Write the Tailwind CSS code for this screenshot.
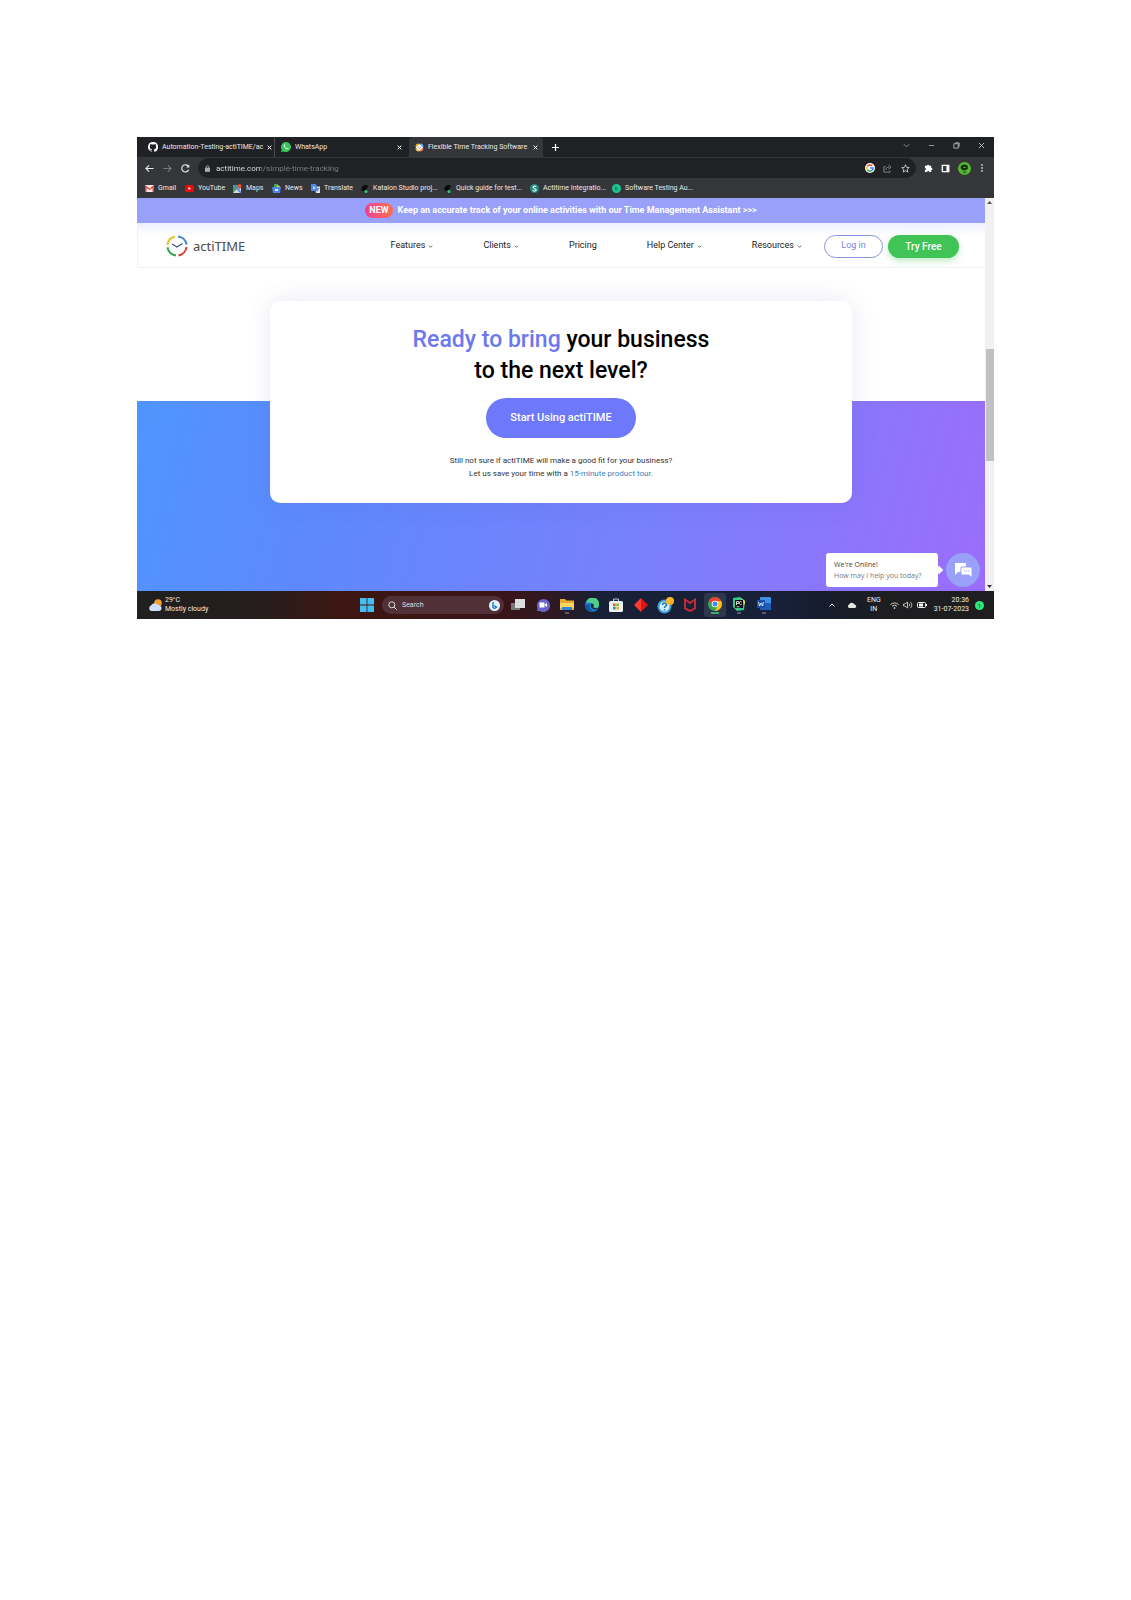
<!DOCTYPE html>
<html lang="en">
<head>
<meta charset="utf-8">
<meta name="viewport" content="width=device-width, initial-scale=1">
<title>Flexible Time Tracking Software</title>
<script src="https://cdn.jsdelivr.net/npm/@tailwindcss/browser@4"></script>
</head>
<body class="bg-white px-[137px] pt-[137px] pb-24 font-['Roboto',sans-serif]">
<div class="flex flex-col">

  <!-- Browser tabs -->
  <header class="bg-[#35363a] text-[7px] text-[#e8eaed]">
    <div class="flex h-5 items-stretch bg-[#202124]">
      <div class="flex w-[138px] items-center gap-1 border-r border-[#4a4b4f] bg-clip-padding pr-[2px] pl-[11px]">
        <svg class="size-[10px] shrink-0" viewBox="0 0 16 16" fill="#fff"><path d="M8 0a8 8 0 0 0-2.500 15.600c.4.1.5-.2.5-.4v-1.400c-2.200.5-2.700-1-2.700-1-.4-.9-.9-1.200-.9-1.200-.7-.5.1-.5.1-.5.8.1 1.200.8 1.200.8.7 1.200 1.900.9 2.300.7.1-.5.3-.9.5-1.100-1.800-.2-3.600-.9-3.600-4 0-.9.3-1.600.8-2.100-.1-.2-.4-1 .1-2.100 0 0 .7-.2 2.200.8a7.600 7.600 0 0 1 4 0c1.500-1 2.200-.8 2.200-.8.4 1.100.2 1.900.1 2.100.5.6.8 1.300.8 2.100 0 3.100-1.900 3.800-3.700 4 .3.200.6.7.6 1.500v2.200c0 .2.1.5.6.4A8 8 0 0 0 8 0z"/></svg>
        <button class="grow text-left whitespace-nowrap">Automation-Testing-actiTIME/ac</button>
        <button class="flex w-3 justify-center" aria-label="Close tab"><svg class="size-[5px]" viewBox="0 0 8 8" stroke="#fff" stroke-width="1.600"><path d="M1 1l6 6M7 1L1 7"/></svg></button>
      </div>
      <div class="flex w-[134px] items-center gap-1 pr-1 pl-[6px]">
        <svg class="size-[10px] shrink-0" viewBox="0 0 16 16"><path d="M0 16l1.100-4A8 8 0 1 1 4.200 15z" fill="#35c759"/><path d="M5 4c-1 .8-.9 2.300.4 4.200s3 3.300 4.700 3.500c1.200 0 1.900-.7 1.900-1.700l-2-1-.9 1c-1.300-.5-2.200-1.400-2.800-2.600l.7-.9L6.200 4z" fill="#fff"/></svg>
        <button class="grow text-left">WhatsApp</button>
        <button class="flex w-3 justify-center" aria-label="Close tab"><svg class="size-[5px]" viewBox="0 0 8 8" stroke="#fff" stroke-width="1.600"><path d="M1 1l6 6M7 1L1 7"/></svg></button>
      </div>
      <div class="flex w-[134px] items-center gap-1 rounded-t bg-[#35363a] pr-1 pl-[6px]">
        <svg class="size-[9px] shrink-0" viewBox="0 0 16 16"><circle cx="8" cy="8" r="6" fill="#fff"/><g fill="none" stroke-width="3"><path d="M2 7a6 6 0 0 1 5-5" stroke="#f3b52d"/><path d="M9 2a6 6 0 0 1 5 5" stroke="#6fa8e8"/><path d="M14 9a6 6 0 0 1-5 5" stroke="#e96b4c"/><path d="M7 14a6 6 0 0 1-5-5" stroke="#e8c55a"/></g><path d="M5 7l3 2 3-2" stroke="#555" fill="none"/></svg>
        <button class="grow text-left whitespace-nowrap">Flexible Time Tracking Software</button>
        <button class="flex w-3 justify-center" aria-label="Close tab"><svg class="size-[5px]" viewBox="0 0 8 8" stroke="#fff" stroke-width="1.600"><path d="M1 1l6 6M7 1L1 7"/></svg></button>
      </div>
      <button class="flex w-6 items-center justify-center" aria-label="New tab"><svg class="size-[7px]" viewBox="0 0 8 8" stroke="#fff" stroke-width="1.400"><path d="M4 0v8M0 4h8"/></svg></button>
      <div class="ml-auto flex items-center gap-[18px] pr-[9px] pb-1">
        <button aria-label="Search tabs"><svg class="block size-[7px]" viewBox="0 0 8 8" fill="none" stroke="#9a9b9e"><path d="M1 2.500l3 3 3-3"/></svg></button>
        <button aria-label="Minimise"><svg class="block size-[7px]" viewBox="0 0 8 8" stroke="#aaa"><path d="M1 4h6"/></svg></button>
        <button aria-label="Restore"><svg class="block size-[7px]" viewBox="0 0 8 8" fill="none" stroke="#bbb"><path d="M1 2h5v5H1zM2.500 1H7v4.500"/></svg></button>
        <button aria-label="Close window"><svg class="block size-[7px]" viewBox="0 0 8 8" stroke="#ccc"><path d="M1 1l6 6M7 1L1 7"/></svg></button>
      </div>
    </div>

    <!-- Address bar -->
    <div class="flex h-[22px] items-center pl-2">
      <div class="flex w-[53px] gap-[9px]">
        <button aria-label="Back"><svg class="block size-[9px]" viewBox="0 0 10 10" fill="none" stroke="#e8eaed" stroke-width="1.200"><path d="M9.500 5H1M4.500 1.500L1 5l3.500 3.500"/></svg></button>
        <button aria-label="Forward"><svg class="block size-[9px]" viewBox="0 0 10 10" fill="none" stroke="#77787b" stroke-width="1.200"><path d="M.5 5H9M5.500 1.500L9 5 5.500 8.500"/></svg></button>
        <button aria-label="Reload"><svg class="block size-[9px]" viewBox="0 0 10 10" fill="none" stroke="#e8eaed" stroke-width="1.300"><path d="M8.500 6.500A4 4 0 1 1 8.200 2.700"/><path d="M9.200.5v3.300H5.800z" fill="#e8eaed" stroke="none"/></svg></button>
      </div>
      <div class="flex h-5 grow items-center gap-[6px] rounded-full bg-[#202124] pr-[6px] pl-[7px]">
        <svg class="h-[7px] w-[5px]" viewBox="0 0 6 8"><path d="M0 3h6v5H0z" fill="#aaabad"/><path d="M1.500 3.500V2a1.500 1.500 0 0 1 3 0v1.500" fill="none" stroke="#aaabad"/></svg>
        <input aria-label="Address" value="actitime.com/simple-time-tracking" class="h-4 min-w-0 grow bg-[linear-gradient(90deg,#e8eaed_45px,#7d8084_45px)] bg-clip-text text-[8px] text-transparent outline-none">
        <svg class="size-[10px]" viewBox="0 0 16 16"><circle cx="8" cy="8" r="8" fill="#fff"/><g fill="none" stroke-width="2.400"><path d="M3.700 5.500A5 5 0 0 1 11.500 4.500" stroke="#ea4335"/><path d="M3.700 5.500a5 5 0 0 0 0 5" stroke="#fbbc05"/><path d="M3.700 10.500a5 5 0 0 0 7.500 1.300" stroke="#34a853"/><path d="M11.200 11.800A5 5 0 0 0 13 8H8" stroke="#4285f4"/></g></svg>
        <button aria-label="Share" class="ml-[2px]"><svg class="block size-[9px]" viewBox="0 0 10 10" fill="none" stroke="#8a8b8e"><path d="M3 3H1v6h7V7.500M3 6.500c.3-2 1.500-3 4-3M6 1l3 2.500L6 6"/></svg></button>
        <button aria-label="Bookmark" class="ml-[3px]"><svg class="block size-[9px]" viewBox="0 0 10 10" fill="none" stroke="#d0d1d3"><path d="M5 .9l1.200 2.800 3 .3-2.300 2 .7 3L5 7.400 2.400 9l.7-3L.8 4l3-.3z"/></svg></button>
      </div>
      <div class="flex items-center gap-2 pr-[9px] pl-2">
        <svg class="size-[9px]" viewBox="0 0 10 10" fill="#fff"><path d="M1 2h2.200a1.300 1.300 0 0 1 2.600 0H8v2.300a1.300 1.300 0 0 1 0 2.600V9H5.800a1.200 1.200 0 0 0-2.400 0H1V6.800a1.200 1.200 0 0 0 0-2.400z"/></svg>
        <svg class="size-[9px]" viewBox="0 0 10 10"><path d="M1.500 1.500h7v7h-7z" fill="none" stroke="#fff" stroke-width="1.600"/><path d="M6 1h3v8H6z" fill="#fff"/></svg>
        <svg class="size-[13px]" viewBox="0 0 14 14"><circle cx="7" cy="7" r="7" fill="#58b82f"/><path d="M3 4l4-1.500L10.500 4v3.500L8 9H5L3 7z" fill="#14300f"/><path d="M4 10h6l-3 3z" fill="#2e7f35"/><path d="M6 5.500h2v1H6z" fill="#7bd34d"/></svg>
        <button aria-label="Menu"><svg class="block h-2 w-[6px]" viewBox="0 0 6 8" fill="#c8c9cb"><circle cx="3" cy="1" r=".9"/><circle cx="3" cy="4" r=".9"/><circle cx="3" cy="7" r=".9"/></svg></button>
      </div>
    </div>

    <!-- Bookmarks -->
    <nav class="grid h-[19px] grid-cols-[40px_48px_39px_39px_50px_83px_86px_82px_1fr] items-center pl-2 leading-none whitespace-nowrap" aria-label="Bookmarks">
      <a href="#" class="flex items-center gap-1"><svg class="h-[7px] w-[9px]" viewBox="0 0 9 7"><path d="M0 0h9v7H0z" fill="#f6e7e5"/><path d="M0 7V0l4.500 3.500L9 0v7H7.500V3L4.500 5 1.500 3v4z" fill="#dd4b3e"/></svg>Gmail</a>
      <a href="#" class="flex items-center gap-1"><svg class="h-[7px] w-[9px]" viewBox="0 0 9 7"><rect width="9" height="7" rx="1.500" fill="#e60b0b"/><path d="M3.500 2v3L6 3.500z" fill="#fff"/></svg>YouTube</a>
      <a href="#" class="flex items-center gap-1"><svg class="size-[9px]" viewBox="0 0 9 9"><path d="M0 1h8v8H0z" fill="#3fa659"/><path d="M0 9l8-8v8z" fill="#d6d9de"/><path d="M1 1l7 8" stroke="#4b83e8" stroke-width="1.500"/><path d="M6.500 0A2 2 0 0 1 8.500 2c0 1.500-2 3.500-2 3.500S4.500 3.500 4.500 2a2 2 0 0 1 2-2" fill="#e64b3b"/></svg>Maps</a>
      <a href="#" class="flex items-center gap-1"><svg class="size-[9px]" viewBox="0 0 9 9"><path d="M2 0h4v4H2z" fill="#3fa659"/><path d="M5 1l3 1-1 3H4z" fill="#e8b83b"/><path d="M0 3h9L8 9H1z" fill="#4a86ea"/><path d="M3 5h3v2H3z" fill="#dfe9fb"/></svg>News</a>
      <a href="#" class="flex items-center gap-1"><svg class="size-[9px]" viewBox="0 0 9 9"><path d="M3.500 2.500H9V9H5z" fill="#dde1e8"/><path d="M0 0h5l2 7H0z" fill="#4a86ea"/><path d="M4.300 3H2.500v1.800h1.800" stroke="#fff" stroke-width=".8" fill="none"/><path d="M6 4.500h2.500M7.500 4.500L6 7.500" stroke="#666" stroke-width=".7"/></svg>Translate</a>
      <a href="#" class="flex items-center gap-1"><svg class="size-[8px]" viewBox="0 0 8 8"><path d="M1 6a4 4 0 0 1 6-5L5 5z" fill="#050a0a"/><circle cx="5" cy="6.500" r="1.500" fill="#26d07c"/></svg>Katalon Studio proj...</a>
      <a href="#" class="flex items-center gap-1"><svg class="size-[8px]" viewBox="0 0 8 8"><path d="M1 6a4 4 0 0 1 6-5L5 5z" fill="#050a0a"/><circle cx="5" cy="6.500" r="1.500" fill="#26d07c"/></svg>Quick guide for test...</a>
      <a href="#" class="flex items-center gap-1"><svg class="size-[9px]" viewBox="0 0 10 10"><circle cx="5" cy="5" r="5" fill="#1f8a80"/><path d="M7 2.800C5 1.800 3 2.500 3.500 4S7 5 6.800 6.600 4 8 3 7" stroke="#fff" stroke-width="1.300" fill="none"/></svg>Actitime Integratio...</a>
      <a href="#" class="flex items-center gap-1"><svg class="size-[9px]" viewBox="0 0 10 10"><circle cx="5" cy="5" r="5" fill="#1fc48d"/><path d="M4 3v4M6 3.500L4.500 5 6 7" stroke="#0b6e54" fill="none"/></svg>Software Testing Au...</a>
    </nav>
  </header>

  <!-- Web page -->
  <div class="flex">
    <main class="flex min-w-0 grow flex-col">
      <div class="flex h-[25px] items-center justify-center gap-[5px] bg-[#98a0fa] text-[9px] leading-[11px] font-bold text-white">
        <span class="rounded-full bg-linear-to-r from-[#f03a94] to-[#fb6d45] px-1 py-[2px]">NEW</span>
        <a href="#">Keep an accurate track of your online activities with our Time Management Assistant &gt;&gt;&gt;</a>
      </div>
      <div class="flex h-[45px] items-center justify-between border-b border-l border-[#f2f2f5] bg-linear-to-b from-[#eeefff] to-white to-30% pt-[2px] pr-[26px] pl-7 text-[9px] text-[#222]">
        <a href="#" class="flex items-center gap-[5px] font-['Noto_Sans',sans-serif] text-[13px] leading-none text-[#4a4a4a]">
          <svg class="size-[22px]" viewBox="0 0 22 22" fill="none"><g stroke-width="2.200"><path d="M1.500 10a9.500 9.500 0 0 1 7.500-8.300" stroke="#e8c33c"/><path d="M12 1.500a9.500 9.500 0 0 1 8.500 8" stroke="#4285c8"/><path d="M20.500 12a9.500 9.500 0 0 1-8 8.400" stroke="#d9473f"/><path d="M10 20.400a9.500 9.500 0 0 1-8.500-8" stroke="#35a853"/></g><path d="M6 9l5 3 5.500-3.500" stroke="#3c5878" stroke-width="1.300"/></svg>
          actiTIME
        </a>
        <div class="flex items-center">
          <nav class="flex items-center gap-[50px] pr-[22px]" aria-label="Main">
            <a href="#" class="flex items-center gap-[3px]">Features <svg class="size-[5px]" viewBox="0 0 6 6" fill="none" stroke="#444"><path d="M1 2l2 2 2-2"/></svg></a>
            <a href="#" class="flex items-center gap-[3px]">Clients <svg class="size-[5px]" viewBox="0 0 6 6" fill="none" stroke="#444"><path d="M1 2l2 2 2-2"/></svg></a>
            <a href="#">Pricing</a>
            <a href="#" class="flex items-center gap-[3px]">Help Center <svg class="size-[5px]" viewBox="0 0 6 6" fill="none" stroke="#444"><path d="M1 2l2 2 2-2"/></svg></a>
            <a href="#" class="flex items-center gap-[3px]">Resources <svg class="size-[5px]" viewBox="0 0 6 6" fill="none" stroke="#444"><path d="M1 2l2 2 2-2"/></svg></a>
          </nav>
          <div class="flex gap-[5px]">
            <button class="h-[23px] w-[59px] rounded-full border border-[#8d94dc] text-[#7c84dc]">Log in</button>
            <button class="h-[23px] w-[71px] rounded-full bg-[#3fc455] text-[10px] font-medium text-white shadow-[0_3px_6px_#3fc45555]">Try Free</button>
          </div>
        </div>
      </div>

      <section class="relative flex h-[323px] justify-center pt-[33px]">
        <div class="absolute inset-x-0 top-[133px] bottom-0 bg-[linear-gradient(105deg,#4f95fe_0%,#5f88fd_25%,#7880fc_60%,#9b6dfd_100%)]"></div>
        <div class="relative flex h-[202px] w-[582px] max-w-full flex-col items-center rounded-[10px] bg-white pt-[23px] text-center shadow-[0_0_24px_#5058a020]">
          <h1 class="text-[23px] leading-[31px] font-medium text-black"><span class="text-[#6d77ee]">Ready to bring</span> your business<br>to the next level?</h1>
          <button class="mt-3 h-10 w-[150px] rounded-full bg-[#6d79fa] text-[11px] font-medium text-white">Start Using actiTIME</button>
          <p class="mt-4 text-[8px] leading-[13px] text-[#333]">Still not sure if actiTIME will make a good fit for your business?<br>Let us save your time with a <a href="#" class="text-[#3a7fc0]">15-minute product tour.</a></p>
        </div>
        <!-- Chat prompt -->
        <div class="absolute right-[5px] bottom-1 flex items-center gap-2">
          <div class="relative w-[112px] rounded-[3px] bg-white px-2 py-[6px] font-['Open_Sans',sans-serif] text-[7px] leading-[11px] text-[#777]">
            <p class="text-[#444]">We're Online!</p>
            <p class="whitespace-nowrap">How may I help you today?</p>
            <span class="absolute top-[14px] -right-1 size-[6px] rotate-45 bg-white"></span>
          </div>
          <button class="flex size-[34px] items-center justify-center rounded-full bg-[#98a0f8]" aria-label="Open chat"><svg class="h-4 w-[19px]" viewBox="0 0 19 16"><path d="M1 1h11v9H4l-3 3z" fill="#fff"/><path d="M7 5h11v11l-3-3H7z" fill="#fff" stroke="#98a0f8"/><path d="M10 9h1m1 0h1m1 0h1" stroke="#98a0f8"/></svg></button>
        </div>
      </section>
    </main>
    <div class="flex w-[9px] flex-col items-center bg-[#f1f1f1]" aria-hidden="true">
      <svg class="mt-[3px] h-[3px] w-[5px]" viewBox="0 0 5 3"><path d="M0 3l2.500-3L5 3z" fill="#555"/></svg>
      <div class="mt-[145px] h-[112px] w-2 bg-[#c1c1c1]"></div>
      <svg class="mt-auto mb-[3px] h-[3px] w-[5px]" viewBox="0 0 5 3"><path d="M0 0l2.500 3L5 0z" fill="#333"/></svg>
    </div>
  </div>

  <!-- Taskbar -->
  <footer class="flex h-7 items-center bg-[linear-gradient(90deg,#202020_0%,#251e1d_14%,#3d1612_24%,#3a1418_42%,#301820_48%,#172035_54%,#18203a_75%,#151c2c_80%,#1e1e20_88%)] text-[7px] leading-[9px] text-[#eee]">
    <div class="flex w-[223px] items-center gap-[3px] pl-[11px]">
      <svg class="h-3 w-[14px]" viewBox="0 0 14 12"><circle cx="10" cy="4" r="3.800" fill="#f0a030"/><path d="M3 12a3 3 0 0 1 0-5.500A4 4 0 0 1 10 6a3 3 0 0 1 1 6z" fill="#cfdffa"/></svg>
      <p>29°C<br>Mostly cloudy</p>
    </div>
    <button aria-label="Start"><svg class="block size-[14px]" viewBox="0 0 14 14" fill="#45bdf2"><path d="M0 0h6.600v6.600H0zM7.400 0H14v6.600H7.400zM0 7.400h6.600V14H0zM7.400 7.400H14V14H7.400z"/></svg></button>
    <div class="ml-2 flex h-[18px] w-[122px] items-center gap-[5px] rounded-full bg-[#523038] pr-1 pl-[6px]">
      <svg class="size-[9px] shrink-0" viewBox="0 0 9 9" fill="none" stroke="#ddd"><circle cx="3.800" cy="3.800" r="3"/><path d="M6 6l2.700 2.700"/></svg>
      <input aria-label="Search" placeholder="Search" class="w-0 grow bg-transparent outline-none placeholder:text-[#ddd]">
      <svg class="size-[11px] shrink-0" viewBox="0 0 11 11"><circle cx="5.500" cy="5.500" r="5.500" fill="#e8f4fc"/><path d="M4 2v5.500L5.500 8.500 7.500 7.200 5.300 5.500" stroke="#1678cc" stroke-width="1.400" fill="none"/></svg>
    </div>
    <div class="ml-[2px] grid h-full w-[270px] grid-cols-11 place-items-center">
      <svg class="size-[14px]" viewBox="0 0 14 14"><path d="M0 5h9v7H0z" fill="#777"/><path d="M4 1h10v9H4z" fill="#ddd"/></svg>
      <svg class="size-[14px]" viewBox="0 0 14 14"><path d="M1 13l.5-3A6.500 6.500 0 1 1 4 13z" fill="#6b63c9"/><path d="M3.500 4.500h5v5h-5zM9 6.500l2-1.500v4L9 7.500z" fill="#fff"/></svg>
      <svg class="h-[18px] w-[14px]" viewBox="0 0 14 18"><path d="M0 3h5l1.500 1.500H14V14H0z" fill="#e8a92c"/><path d="M0 7h14v5H0z" fill="#fbd55f"/><path d="M2 11h10v3H2z" fill="#2e86d6"/><path d="M5 17h4" stroke="#999"/></svg>
      <svg class="size-[14px]" viewBox="0 0 14 14"><circle cx="7" cy="7" r="7" fill="#1d84cf"/><path d="M1 5a6.500 6.500 0 0 1 13 2c0 2-1.500 3-4 3-2 0-2-1-1.500-2C9 6 6 3.500 1 5z" fill="#4fcf8a"/><path d="M5 6c-2 3 1 7 5 7-5 2-10-2-9.500-6z" fill="#1257a4"/><path d="M7 5.500c2 .5 2 2.500 1.500 3s0 1.500 1.500 1.500c1 1 3 0 3.500 0-1 1.500-4 2-6 .5S5 6 7 5.500z" fill="#17253c"/></svg>
      <svg class="size-[14px]" viewBox="0 0 14 14"><path d="M4.500 3V1h5v2" fill="none" stroke="#bcd"/><rect y="3" width="14" height="11" rx="1.500" fill="#eef1f4"/><path d="M4 5.500h2.700v2.700H4z" fill="#e0613c"/><path d="M7.300 5.500H10v2.700H7.300z" fill="#7cb83b"/><path d="M4 8.800h2.700v2.700H4z" fill="#2f8fdd"/><path d="M7.300 8.800H10v2.700H7.300z" fill="#f0b429"/></svg>
      <svg class="size-[14px]" viewBox="0 0 14 14"><path d="M7 0v14L0 7z" fill="#ff3b30"/><path d="M7 0l7 7-7 7z" fill="#d81818"/></svg>
      <svg class="size-[17px]" viewBox="0 0 17 17"><circle cx="7.500" cy="9.500" r="7" fill="#3d9fd8"/><circle cx="7.500" cy="9.500" r="5" fill="#d8eef8"/><path d="M5.500 8c0-3 4.500-2.500 4 0-.2 1.200-2 1.200-2 3m0 1v1.500" stroke="#1c7cb8" stroke-width="1.600" fill="none"/><circle cx="13" cy="4" r="4" fill="#fbb52a"/></svg>
      <svg class="size-[14px]" viewBox="0 0 14 14" fill="none"><path d="M2 1.500l5 3.500 5-3.500v9L7 13l-5-2.500z" stroke="#c22a38" stroke-width="2"/></svg>
      <div class="flex h-6 w-[22px] items-center justify-center rounded-[3px] bg-white/10"><svg class="h-[18px] w-[14px]" viewBox="0 0 14 18"><circle cx="7" cy="8" r="7" fill="#35a853"/><path d="M1 4.500A7 7 0 0 1 13.200 5H7L4 9z" fill="#ea4335"/><path d="M13.200 5A7 7 0 0 1 7 15l3-6-1-4z" fill="#fbc116"/><circle cx="7" cy="8" r="3.300" fill="#fff"/><circle cx="7" cy="8" r="2.500" fill="#4285f4"/><path d="M3 17h8" stroke="#3fd07e" stroke-width="1.500"/></svg></div>
      <svg class="h-[18px] w-[14px]" viewBox="0 0 14 18"><path d="M1 2l7-1 5 4-1 9-7 1-4-4z" fill="#35c987"/><path d="M9 2l4 3v4z" fill="#f0e04a"/><path d="M3 4h8v8H3z" fill="#0a0a0a"/><path d="M4.500 9V5.500h1.500a1 1 0 0 1 0 2H4.500M9.800 6a1.500 1.500 0 1 0 0 2M4.500 10.800h3" stroke="#fff" stroke-width=".8" fill="none"/><path d="M5 17h4" stroke="#999"/></svg>
      <svg class="h-[18px] w-[14px]" viewBox="0 0 14 18"><rect x="3" y="1" width="11" height="13" rx="1" fill="#3f8fe6"/><path d="M3 7h11v7H3z" fill="#1f5cbc"/><path d="M0 4h8v8H0z" fill="#1a50a8"/><path d="M1.500 6l1 4L4 7l1.500 3 1-4" stroke="#fff" stroke-width=".8" fill="none"/><path d="M5 17h4" stroke="#999"/></svg>
    </div>
    <div class="ml-auto flex items-center pr-[10px]">
      <svg class="mr-3 size-[6px]" viewBox="0 0 6 6" fill="none" stroke="#fff"><path d="M.5 4.500L3 2l2.500 2.500"/></svg>
      <svg class="mr-[10px] h-[6px] w-[10px]" viewBox="0 0 10 6"><path d="M2 6a2 2 0 0 1 0-3.500 3 3 0 0 1 5.500 0A1.800 1.800 0 0 1 8 6z" fill="#e6e6e6"/></svg>
      <p class="mr-[9px] text-center">ENG<br>IN</p>
      <svg class="mr-1 h-[7px] w-[9px]" viewBox="0 0 9 7" fill="none" stroke="#ccc"><path d="M.5 2.500a6 6 0 0 1 8 0M2 4.300a3.500 3.500 0 0 1 5 0"/><circle cx="4.500" cy="6" r=".6" fill="#ccc"/></svg>
      <svg class="mr-1 h-2 w-[10px]" viewBox="0 0 10 8" fill="none" stroke="#ddd" stroke-width=".8"><path d="M.5 3h1.500L4.500 1v6L2 5H.5zM6 2.500a2 2 0 0 1 0 3M7.500 1a4 4 0 0 1 0 6"/></svg>
      <svg class="mr-[7px] h-[6px] w-[10px]" viewBox="0 0 10 6"><rect x=".5" y=".5" width="8" height="5" rx="1" fill="none" stroke="#eee"/><path d="M2 1.500h4v3H2zM9 2h1v2H9z" fill="#fff"/></svg>
      <p class="mr-[6px] text-right">20:36<br>31-07-2023</p>
      <span class="flex size-[9px] items-center justify-center rounded-full bg-[#2ee87c] text-[6px] text-[#0b4a28]">1</span>
    </div>
  </footer>
</div>
</body>
</html>
